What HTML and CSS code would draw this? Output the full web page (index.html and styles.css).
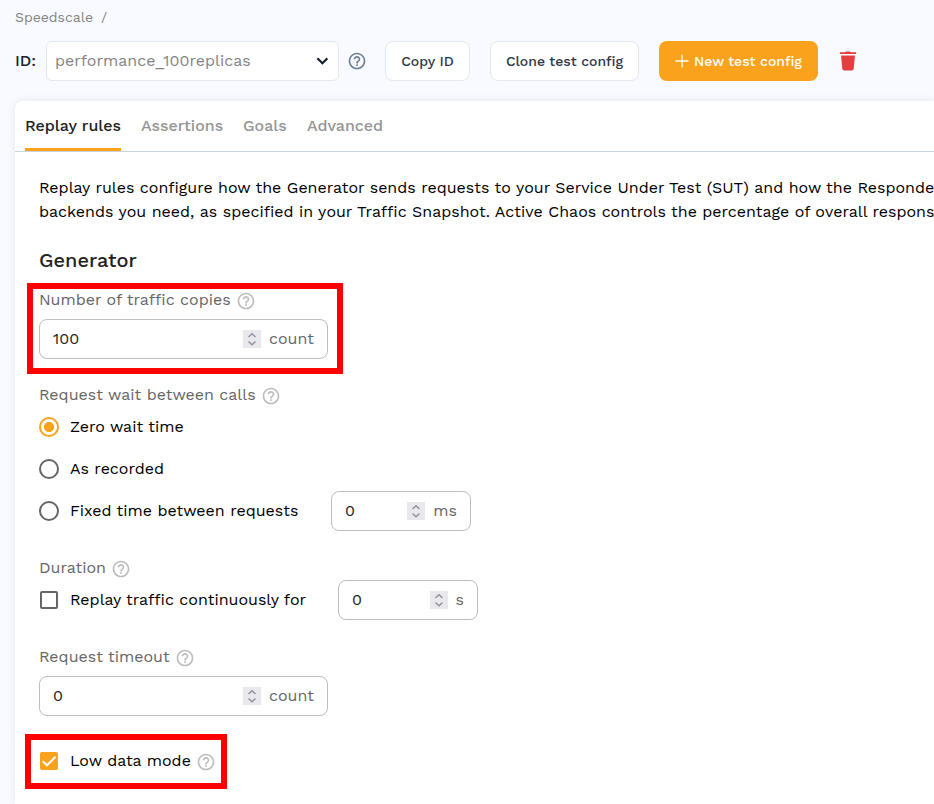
FILE: index.html
```html
<!DOCTYPE html>
<html lang="en">
<head>
<meta charset="utf-8">
<title>Speedscale</title>
<link rel="stylesheet" href="styles.css">
</head>
<body>
<svg width="0" height="0" class="defs">
  <symbol id="help" viewBox="0 0 24 24"><path fill="currentColor" d="M11 18h2v-2h-2v2zm1-16C6.48 2 2 6.48 2 12s4.480 10 10 10 10-4.480 10-10S17.520 2 12 2zm0 18c-4.410 0-8-3.590-8-8s3.590-8 8-8 8 3.590 8 8-3.590 8-8 8zm0-14c-2.210 0-4 1.790-4 4h2c0-1.100.9-2 2-2s2 .9 2 2c0 2-3 1.750-3 5h2c0-2.250 3-2.500 3-5 0-2.210-1.790-4-4-4z"/></symbol>
  <symbol id="spin" viewBox="0 0 18 18"><path fill="none" stroke="#8f8f9d" stroke-width="1.4" d="M5.500 7 9 3.700 12.500 7M5.500 11.500 9 14.800l3.500-3.300"/></symbol>
</svg>
<nav class="crumbs"><span class="crumb">Speedscale</span><span>/</span></nav>
<header class="toolbar">
  <span class="id-label">ID:</span>
  <div class="select"><span class="select-text">performance_100replicas</span><svg width="12" height="8" viewBox="0 0 12 8"><path fill="none" stroke="#1a202c" stroke-width="2.200" d="M1.400 1.300 6.400 6.300 11.400 1.300"/></svg></div>
  <svg class="help-top"><use href="#help"/></svg>
  <button class="btn copy"><span>Copy ID</span></button>
  <button class="btn clone"><span>Clone test config</span></button>
  <button class="btn new"><svg width="14" height="14" viewBox="0 0 14 14"><path stroke="#fff" stroke-width="1.300" d="M7 .5v13M.5 7h13"/></svg><span>New test config</span></button>
  <svg class="trash" width="18" height="20" viewBox="0 0 18 20"><path fill="#e53e3e" d="M1 1.200h5.200L7 .4h4l.8.8H17V3H1zM2 4.500h14l-1.300 13.200q-.2 1.800-2 1.800H5.300q-1.800 0-2-1.800z"/></svg>
</header>
<main class="card">
  <div class="tabs">
    <span class="tab active">Replay rules</span><span class="tab t2">Assertions</span><span class="tab t3">Goals</span><span class="tab t4">Advanced</span>
  </div>
  <div class="content">
    <p class="intro"><span class="line1">Replay rules configure how the Generator sends requests to your Service Under Test (SUT) and how the Responde</span><br><span class="line2">backends you need, as specified in your Traffic Snapshot. Active Chaos controls the percentage of overall respons</span></p>
    <h2><span>Generator</span></h2>
    <section class="group copies">
      <div class="label"><span class="l1">Number of traffic copies</span><svg class="help"><use href="#help"/></svg></div>
      <div class="input wide"><span class="value hundred">100</span><svg class="spin"><use href="#spin"/></svg><span class="unit count">count</span></div>
      <div class="mark mark-copies"></div>
    </section>
    <section class="group wait">
      <div class="label"><span class="l2">Request wait between calls</span><svg class="help"><use href="#help"/></svg></div>
      <div class="option"><i class="radio on"></i><span class="o1">Zero wait time</span></div>
      <div class="option"><i class="radio"></i><span class="o2">As recorded</span></div>
      <div class="option"><i class="radio"></i><span class="o3">Fixed time between requests</span><div class="input ms"><span class="value">0</span><svg class="spin"><use href="#spin"/></svg><span class="unit">ms</span></div></div>
    </section>
    <section class="group duration">
      <div class="label"><span class="l3">Duration</span><svg class="help"><use href="#help"/></svg></div>
      <div class="option short"><i class="check"></i><span class="o4">Replay traffic continuously for</span><div class="input sec"><span class="value">0</span><svg class="spin"><use href="#spin"/></svg><span class="unit">s</span></div></div>
    </section>
    <section class="group timeout">
      <div class="label"><span class="l4">Request timeout</span><svg class="help"><use href="#help"/></svg></div>
      <div class="input wide"><span class="value">0</span><svg class="spin"><use href="#spin"/></svg><span class="unit count">count</span></div>
    </section>
    <section class="group low">
      <div class="option"><i class="check on"><svg width="18" height="18" viewBox="0 0 18 18"><path fill="none" stroke="#fff" stroke-width="2" d="M2.700 9.200 7 13.300 15.500 4.800"/></svg></i><span class="o5">Low data mode</span><svg class="help"><use href="#help"/></svg></div>
      <div class="mark mark-low"></div>
    </section>
  </div>
</main>
</body>
</html>
```
FILE: styles.css
```css
* { box-sizing: border-box; }
body { margin: 0; height: 804px; overflow: hidden; background: #f9faff; font: 16px/24px "Work Sans", Inter, sans-serif; color: #000; white-space: nowrap; padding-left: 15px; }
.defs { position: absolute; }
svg { flex: none; display: block; }
.crumbs { display: flex; gap: 8px; height: 41px; padding-top: 5px; font-size: 14px; color: #848484; }
.crumb { width: 78px; }
.toolbar { display: flex; align-items: center; height: 40px; color: #1a202c; }
.id-label { width: 31px; font-weight: 500; }
.select { width: 293px; height: 40px; display: flex; align-items: center; justify-content: space-between; padding: 0 10px 0 8px; border: 1px solid #e2e8f0; border-radius: 6px; background: #fff; color: #848484; }
.help-top { width: 20px; height: 20px; margin: 0 18px 0 8px; color: #718096; }
.btn { height: 40px; padding: 0; display: flex; align-items: center; justify-content: center; border: 1px solid #e2e8f0; border-radius: 8px; background: #fff; color: #2d3748; font: 500 14px/20px "Work Sans", Inter, sans-serif; }
.copy { width: 85px; margin-right: 20px; }
.clone { width: 149px; margin-right: 20px; }
.new { width: 159px; gap: 5px; border: 0; background: #faa21b; color: #fff; }
.trash { margin-left: 21px; }
.card { height: 703px; margin-top: 20px; background: #fff; border-radius: 8px 0 0 0; box-shadow: 0 0 8px rgba(45, 55, 72, .1); }
.tabs { display: flex; gap: 20px; height: 51px; padding: 0 10px; border-bottom: 1px solid #cbd5e0; color: #959595; font-weight: 500; line-height: 50px; }
.tab { height: 50px; }
.active { width: 96px; border-bottom: 3px solid #faa21b; color: #222; }
.t2 { width: 82px; }
.t3 { width: 44px; }
.content { padding: 24px 0 0 24px; }
.intro { margin: 0; }
h2 { margin: 24px 0 0; height: 40px; font-size: 20px; line-height: 24px; font-weight: 500; color: #222; }
.group { position: relative; }
.label { display: flex; align-items: center; height: 24px; color: #666; }
.help { width: 20px; height: 20px; margin: 2px 0 0 5px; color: #bdbdbd; }
.input { display: flex; align-items: center; height: 40px; border: 1px solid #bdbdbd; border-radius: 8px; padding: 0 13px; background: #fff; color: #222; }
.wide { width: 289px; margin-top: 7px; padding-right: 12px; }
.value { flex: 1; }
.spin { width: 18px; height: 18px; background: #e9e9ed; margin-right: 8px; }
.unit { color: #666; }
.count { width: 46px; }
.wait { margin-top: 24px; }
.option { display: flex; align-items: center; height: 42px; }
.wait .label { height: 23px; }
.radio { width: 20px; height: 20px; margin-right: 11px; border: 2px solid #666; border-radius: 50%; }
.radio.on { border-color: #faa21b; background: radial-gradient(circle, #faa21b 4.800px, #fff 5.300px); }
.o3 { width: 261px; }
.ms { width: 140px; }
.duration { margin-top: 24px; }
.duration .option { height: 40px; }
.o4 { width: 268px; }
.check { width: 18px; height: 18px; margin: 0 12px 0 1px; border: 2px solid #666; border-radius: 2px; }
.check.on { border: 0; background: #faa21b; }
.sec { width: 140px; }
.timeout { margin-top: 25px; }
.low { margin-top: 24px; }
.mark { position: absolute; border: 6px solid #f00; }
.mark-copies { left: -12px; top: -5px; width: 316px; height: 91px; }
.mark-low { left: -14px; top: -6px; width: 202px; height: 55px; }
```
